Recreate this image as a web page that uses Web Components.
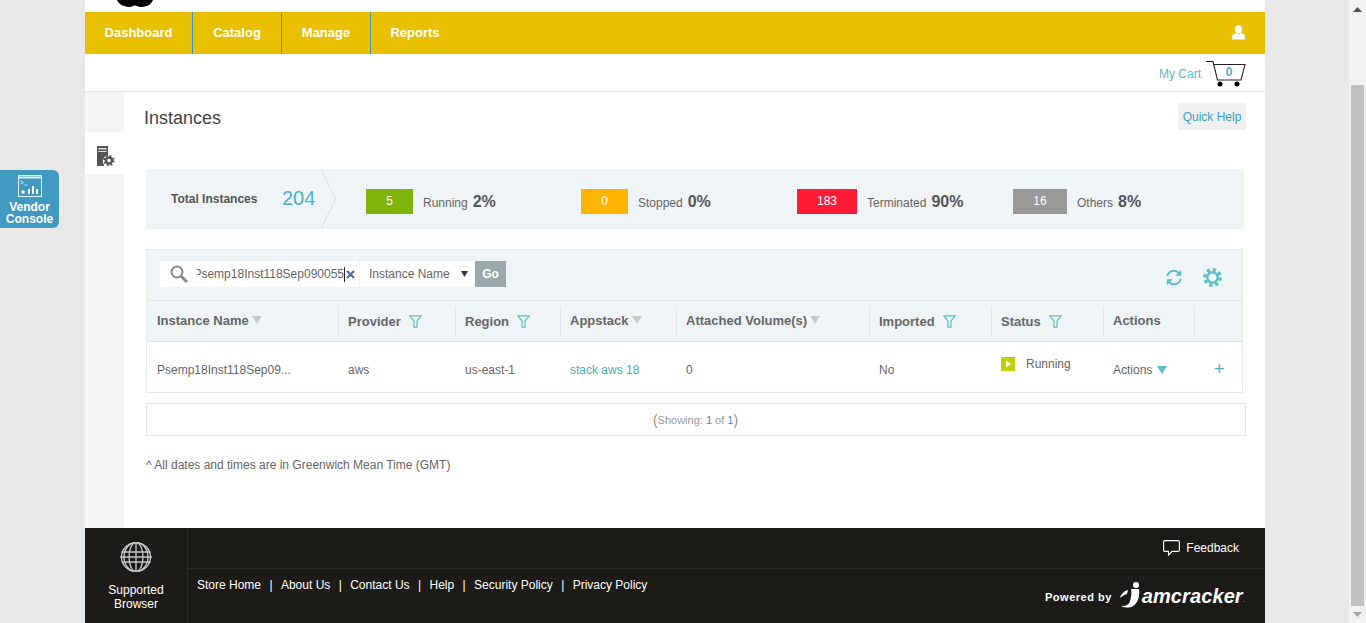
<!DOCTYPE html>
<html lang="en">
<head>
<meta charset="utf-8">
<title>Instances</title>
<style>
    html, body { margin: 0; height: 623px; overflow: hidden; background: #e8e8e8; }
    body { font-family: "Liberation Sans", Arial, sans-serif; font-size: 12px; color: #666; }
</style>
</head>
<body>
<app-shell>
    <top-nav></top-nav>
    <cart-bar></cart-bar>
    <page-body>
        <instance-summary></instance-summary>
        <instances-table></instances-table>
    </page-body>
    <site-footer></site-footer>
</app-shell>
<vendor-tab></vendor-tab>

<script>
const FUNNEL = `<svg width="13" height="13" viewBox="0 0 13 13" fill="none" stroke="#5bbfc9" stroke-width="1.2"><path d="M.8.8h11.400L8 6v6.200H5V6z"/></svg>`;
const SORT = `<svg width="10" height="8" viewBox="0 0 10 8"><path d="M0 0h10L5 8z" fill="#c8c8c8"/></svg>`;

// page frame + scrollbar
class AppShell extends HTMLElement {
    constructor() {
        super();
        this.attachShadow({ mode: 'open' });
        this.shadowRoot.innerHTML = `
            <style>
                :host { display: grid; grid-template-columns: 1fr 17px; height: 623px; }
                .page { padding-left: 85px; }
                .frame { width: 1180px; height: 623px; background: white; display: flex; flex-direction: column; }
                .logo { height: 12px; padding-left: 32px; }
                .logo svg { display: block; }
                .bar { background: #f1f1f1; display: flex; flex-direction: column; align-items: center; }
                .up, .down { height: 17px; display: flex; align-items: center; justify-content: center; flex: none; }
                .up { height: 18px; }
                .track { flex: 1; width: 13px; padding-top: 67px; }
                .thumb { height: 521px; background: #c1c1c1; }
            </style>
            <div class="page">
                <div class="frame">
                    <div class="logo">
                        <svg width="36" height="8" viewBox="0 0 36 8"><path d="M0 0C2 5 8 7 13 7 15 7 16 5.500 18 5.500 20 5.500 21 7 24 7 29 7 34 5 36 0z" fill="#000"/></svg>
                    </div>
                    <slot></slot>
                </div>
            </div>
            <div class="bar">
                <div class="up"><svg width="9" height="5" viewBox="0 0 9 5"><path d="M0 5h9L4.500 0z" fill="#505050"/></svg></div>
                <div class="track"><div class="thumb"></div></div>
                <div class="down"><svg width="9" height="5" viewBox="0 0 9 5"><path d="M0 0h9L4.500 5z" fill="#a3a3a3"/></svg></div>
            </div>
        `;
    }
}
customElements.define('app-shell', AppShell);

// yellow menu
class TopNav extends HTMLElement {
    constructor() {
        super();
        this.attachShadow({ mode: 'open' });
        this.shadowRoot.innerHTML = `
            <style>
                :host { display: flex; height: 42px; background: #e9c000; flex: none; }
                a {
                    width: 88px;
                    text-align: center;
                    color: white;
                    font: bold 13px "Liberation Sans", Arial, sans-serif;
                    line-height: 42px;
                    text-decoration: none;
                    border-right: 1px solid #3f95b8;
                }
                a:first-of-type { width: 107px; }
                a:last-of-type { border-right: none; }
                .user { margin-left: auto; padding: 13px 20px 0 0; }
                svg { display: block; }
            </style>
            <a href="#">Dashboard</a>
            <a href="#">Catalog</a>
            <a href="#">Manage</a>
            <a href="#">Reports</a>
            <div class="user">
                <svg width="13" height="15" viewBox="0 0 14 16" fill="white">
                    <ellipse cx="7" cy="4.600" rx="3.800" ry="4.300"/>
                    <path d="M0 12.500C0 10 2.500 9 4.500 8.500 6 9.800 8 9.800 9.500 8.500 11.500 9 14 10 14 12.500V14.500Q14 15.500 13 15.500H1Q0 15.500 0 14.500z"/>
                </svg>
            </div>
        `;
    }
}
customElements.define('top-nav', TopNav);

class CartBar extends HTMLElement {
    constructor() {
        super();
        this.attachShadow({ mode: 'open' });
        this.shadowRoot.innerHTML = `
            <style>
                :host {
                    display: flex;
                    justify-content: flex-end;
                    align-items: flex-start;
                    gap: 5px;
                    height: 37px;
                    padding-right: 19px;
                    border-bottom: 1px solid #e6e6e6;
                    flex: none;
                }
                .label { color: #5bb7c9; font-size: 12px; margin-top: 13px; }
                .cart { position: relative; width: 40px; height: 34px; margin-top: 6px; }
                .cart svg { display: block; }
                .count {
                    position: absolute;
                    left: 0;
                    right: 0;
                    top: 5px;
                    padding-left: 6px;
                    text-align: center;
                    font-size: 12px;
                    font-weight: bold;
                    color: #4cb3cf;
                }
            </style>
            <span class="label">My Cart</span>
            <div class="cart">
                <svg width="40" height="30" viewBox="0 0 40 30" fill="none" stroke="#222" stroke-width="1.100">
                    <path d="M0 1.500H7L11.500 20H35L39 4.500H8"/>
                    <circle cx="14" cy="24" r="2.500" fill="#000" stroke="none"/>
                    <circle cx="31" cy="24" r="2.500" fill="#000" stroke="none"/>
                </svg>
                <span class="count">0</span>
            </div>
        `;
    }
}
customElements.define('cart-bar', CartBar);

// side rail, title and content column
class PageBody extends HTMLElement {
    constructor() {
        super();
        this.attachShadow({ mode: 'open' });
        this.shadowRoot.innerHTML = `
            <style>
                :host { display: flex; height: 436px; flex: none; }
                .rail { width: 39px; background: #f5f5f5; padding-top: 40px; flex: none; }
                .rail div { height: 42px; background: white; padding: 14px 0 0 12px; box-sizing: border-box; }
                .rail svg { display: block; }
                .content { flex: 1; padding: 11px 19px 0 22px; }
                .head { display: flex; justify-content: space-between; height: 66px; }
                h1 { margin: 4px 0 0 -2px; font: normal 18px/22px "Liberation Sans", Arial, sans-serif; color: #444; }
                .help {
                    width: 68px;
                    height: 27px;
                    line-height: 29px;
                    text-align: center;
                    background: #f0f0f0;
                    color: #3a9fc4;
                    font-size: 12px;
                }
                .note { margin-top: 22px; color: #666; }
            </style>
            <div class="rail">
                <div>
                    <svg width="18" height="20" viewBox="0 0 18 20">
                        <path d="M0 0h11v9a6.500 6.500 0 0 0-4 10v1H0z" fill="#555"/>
                        <path d="M1.500 2h8v1.500h-8zM1.500 5h8v1h-8z" fill="#ddd"/>
                        <circle cx="12" cy="14.500" r="3" fill="none" stroke="#555" stroke-width="2.400"/>
                        <circle cx="12" cy="14.500" r="4.800" fill="none" stroke="#555" stroke-width="1.600" stroke-dasharray="2 1.770"/>
                    </svg>
                </div>
            </div>
            <div class="content">
                <div class="head">
                    <h1>Instances</h1>
                    <div class="help">Quick Help</div>
                </div>
                <slot></slot>
                <div class="note">^ All dates and times are in Greenwich Mean Time (GMT)</div>
            </div>
        `;
    }
}
customElements.define('page-body', PageBody);

class SummaryStat extends HTMLElement {
    constructor() {
        super();
        this.attachShadow({ mode: 'open' });
        const w = this.getAttribute('w');
        const c = this.getAttribute('color');
        this.shadowRoot.innerHTML = `
            <style>
                :host { display: flex; align-items: center; }
                .box {
                    width: ${w}px;
                    height: 25px;
                    line-height: 25px;
                    text-align: center;
                    background: ${c};
                    color: white;
                    font-size: 12px;
                }
                .name { margin-left: 10px; color: #666; font-size: 12px; position: relative; top: 1px; }
                b { margin-left: 5px; font-size: 16px; color: #555; }
            </style>
            <div class="box">${this.getAttribute('count')}</div>
            <span class="name">${this.getAttribute('name')}</span>
            <b>${this.getAttribute('pct')}</b>
        `;
    }
}
customElements.define('summary-stat', SummaryStat);

class InstanceSummary extends HTMLElement {
    constructor() {
        super();
        this.attachShadow({ mode: 'open' });
        this.shadowRoot.innerHTML = `
            <style>
                :host {
                    display: flex;
                    align-items: center;
                    height: 60px;
                    margin-right: 2px;
                    background: #eff4f7;
                }
                .total { width: 220px; height: 60px; display: flex; align-items: center; flex: none; position: relative; box-sizing: border-box; padding: 0 0 0 25px; }
                .total span { font-weight: bold; color: #555; font-size: 12px; width: 111px; margin-top: -1px; }
                .total b { font-weight: normal; font-size: 20px; color: #4cb3c9; margin-top: -2px; }
                .total svg { position: absolute; left: 175px; top: 0; }
                .stats { display: grid; grid-template-columns: 215px 216px 216px 1fr; flex: 1; margin-top: 5px; }
            </style>
            <div class="total">
                <span>Total Instances</span>
                <b>204</b>
                <svg width="16" height="60" viewBox="0 0 16 60" fill="none" stroke="#dcdfe2"><path d="M0 0L14.500 30 0 60"/></svg>
            </div>
            <div class="stats">
                <summary-stat w="47" color="#7fb50a" count="5" name="Running" pct="2%"></summary-stat>
                <summary-stat w="47" color="#ffb400" count="0" name="Stopped" pct="0%"></summary-stat>
                <summary-stat w="60" color="#ff1a35" count="183" name="Terminated" pct="90%"></summary-stat>
                <summary-stat w="54" color="#999999" count="16" name="Others" pct="8%"></summary-stat>
            </div>
        `;
    }
}
customElements.define('instance-summary', InstanceSummary);

class InstancesTable extends HTMLElement {
    constructor() {
        super();
        this.attachShadow({ mode: 'open' });
        this.shadowRoot.innerHTML = `
            <style>
                :host { display: block; margin-top: 20px; --cols: 191px 117px 105px 116px 193px 122px 112px 91px 48px; }
                .panel { border: 1px solid #e3eaec; margin-right: 3px; }
                .tools {
                    height: 51px;
                    background: #eff4f7;
                    border-bottom: 1px solid #dfe7ea;
                    display: flex;
                    padding: 11px 20px 0 13px;
                    box-sizing: border-box;
                }
                .search {
                    width: 199px;
                    height: 26px;
                    background: white;
                    border-radius: 2px;
                    display: flex;
                    align-items: center;
                    padding-left: 10px;
                    box-sizing: border-box;
                }
                .search svg { flex: none; display: block; }
                .term {
                    width: 147px;
                    margin-left: 9px;
                    overflow: hidden;
                    display: flex;
                    justify-content: flex-end;
                    white-space: nowrap;
                    border-right: 1px solid #222;
                    color: #666;
                    line-height: 15px;
                    flex: none;
                }
                .clear { margin-left: 1px; }
                .select {
                    width: 114px;
                    height: 26px;
                    margin-left: 1px;
                    background: white;
                    display: flex;
                    align-items: center;
                    justify-content: space-between;
                    padding: 0 6px 0 9px;
                    box-sizing: border-box;
                }
                .go {
                    width: 31px;
                    height: 26px;
                    margin-left: 1px;
                    line-height: 26px;
                    text-align: center;
                    background: #9aa9ab;
                    color: white;
                    font-weight: bold;
                }
                .icons { margin-left: auto; display: flex; gap: 20px; padding-top: 7px; height: 20px; }
                .head, .row { display: grid; grid-template-columns: var(--cols); }
                .head { height: 40px; background: #eff4f7; border-bottom: 1px solid #dfe7ea; align-items: center; }
                .head div {
                    height: 31px;
                    border-left: 1px solid #dfe7ea;
                    padding: 0 0 2px 9px;
                    box-sizing: border-box;
                    display: flex;
                    align-items: center;
                    gap: 3px;
                    font: bold 13px "Liberation Sans", Arial, sans-serif;
                    color: #666;
                }
                .head div:first-child { border-left: none; padding-left: 10px; }
                .head div.f { gap: 8px; padding-bottom: 0; }
                .head svg { display: block; }
                .row { height: 44px; padding-top: 6px; align-items: center; color: #666; }
                .row div { padding-left: 10px; }
                .row a { color: #44aebd; text-decoration: none; }
                .row .status { display: flex; align-items: flex-start; gap: 11px; margin-top: -12px; }
                .act { display: flex; align-items: center; gap: 5px; }
                .row .plus { color: #44b4c4; font-size: 18px; padding-left: 20px; margin-top: -2px; }
                .pager {
                    margin-top: 10px;
                    height: 33px;
                    border: 1px solid #e6e6e6;
                    box-sizing: border-box;
                    display: flex;
                    align-items: center;
                    justify-content: center;
                    font-size: 11px;
                    color: #999;
                    padding-right: 1px;
                }
                .pager i { font-style: normal; font-size: 14px; color: #b08a5e; }
                .pager em { font-style: normal; color: #3f8fb5; }
            </style>
            <div class="panel">
                <div class="tools">
                    <div class="search">
                        <svg width="18" height="18" viewBox="0 0 18 18" fill="none" stroke="#888"><circle cx="7" cy="7" r="5.500" stroke-width="2"/><path d="M11 11l6 6" stroke-width="3"/></svg>
                        <span class="term">Psemp18Inst118Sep090055</span>
                        <svg class="clear" width="9" height="9" viewBox="0 0 9 9" stroke="#4a6fa5" stroke-width="2.200"><path d="M1 1l7 7M8 1l-7 7"/></svg>
                    </div>
                    <div class="select">
                        <span>Instance Name</span>
                        <svg width="7" height="6" viewBox="0 0 7 6"><path d="M0 0h7L3.500 6z" fill="#333"/></svg>
                    </div>
                    <div class="go">Go</div>
                    <div class="icons">
                        <svg width="18" height="19" viewBox="0 0 20 20" fill="none" stroke="#5bbfc9" stroke-width="2.200">
                            <path d="M2.500 8.500A7.500 7.500 0 0 1 15.800 5.500"/>
                            <path d="M17.500 11.500A7.500 7.500 0 0 1 4.200 14.500"/>
                            <path d="M18 1.500V8H11.500z" fill="#5bbfc9" stroke="none"/>
                            <path d="M2 18.500V12H8.500z" fill="#5bbfc9" stroke="none"/>
                        </svg>
                        <svg width="19" height="19" viewBox="0 0 20 20" fill="none" stroke="#5bbfc9">
                            <circle cx="10" cy="10" r="5.500" stroke-width="2.600"/>
                            <circle cx="10" cy="10" r="8.200" stroke-width="3.400" stroke-dasharray="3.440 3"/>
                        </svg>
                    </div>
                </div>
                <div class="head">
                    <div>Instance Name ${SORT}</div>
                    <div class="f">Provider ${FUNNEL}</div>
                    <div class="f">Region ${FUNNEL}</div>
                    <div>Appstack ${SORT}</div>
                    <div>Attached Volume(s) ${SORT}</div>
                    <div class="f">Imported ${FUNNEL}</div>
                    <div class="f">Status ${FUNNEL}</div>
                    <div>Actions</div>
                    <div></div>
                </div>
                <div class="row">
                    <div>Psemp18Inst118Sep09...</div>
                    <div>aws</div>
                    <div>us-east-1</div>
                    <div><a href="#">stack aws 18</a></div>
                    <div>0</div>
                    <div>No</div>
                    <div class="status">
                        <svg width="14" height="14" viewBox="0 0 14 14"><path d="M0 0h14v14H0z" fill="#c3d000"/><path d="M5 3.500L10 7l-5 3.500z" fill="white"/></svg>
                        <span>Running</span>
                    </div>
                    <div class="act">Actions <svg width="10" height="8" viewBox="0 0 10 8"><path d="M0 0h10L5 8z" fill="#5bbfc9"/></svg></div>
                    <div class="plus">+</div>
                </div>
            </div>
            <div class="pager"><i>(</i>Showing:&nbsp;<em>1</em>&nbsp;of&nbsp;<em>1</em><i>)</i></div>
        `;
    }
}
customElements.define('instances-table', InstancesTable);

class SiteFooter extends HTMLElement {
    constructor() {
        super();
        this.attachShadow({ mode: 'open' });
        this.shadowRoot.innerHTML = `
            <style>
                :host { display: flex; flex: 1; background: #1c1b17; color: white; font-size: 12px; }
                a { color: white; text-decoration: none; }
                .browser {
                    width: 102px;
                    border-right: 1px solid #2c2b27;
                    text-align: center;
                    line-height: 14px;
                    padding-top: 14px;
                    flex: none;
                }
                .browser svg { display: block; margin: 0 auto 11px; }
                .main { flex: 1; display: flex; flex-direction: column; }
                .top {
                    height: 40px;
                    border-bottom: 1px solid #2c2b27;
                    display: flex;
                    justify-content: flex-end;
                    align-items: center;
                    gap: 6px;
                    padding-right: 26px;
                }
                .bottom { flex: 1; display: flex; justify-content: space-between; padding: 9px 20px 0 9px; }
                .links { display: flex; gap: 8.400px; align-items: flex-start; line-height: 14px; }
                .power { display: flex; align-items: flex-start; gap: 8px; margin-top: 4px; }
                .power span { font-size: 11px; font-weight: bold; letter-spacing: .5px; margin-top: 9px; }
                .brand { display: flex; align-items: center; }
                .brand b { font: italic bold 20px/24px "Liberation Sans", Arial, sans-serif; letter-spacing: .1px; margin-left: -1px; }
                .brand sup { font-size: 8px; line-height: 8px; margin-top: 8px; color: #bbb; }
            </style>
            <div class="browser">
                <svg width="34" height="30" viewBox="0 0 34 30" fill="none" stroke="#c8c8c8" stroke-width="1.300">
                    <circle cx="17" cy="15" r="14.500"/>
                    <ellipse cx="17" cy="15" rx="7" ry="14.500"/>
                    <ellipse cx="17" cy="15" rx="12" ry="14.500"/>
                    <path d="M17 0v30M2.500 10h29M2.500 20h29M1 15h32"/>
                </svg>
                Supported<br>Browser
            </div>
            <div class="main">
                <div class="top">
                    <svg width="17" height="16" viewBox="0 0 17 16" fill="none" stroke="white" stroke-width="1.100"><path d="M2 .600h13q1.400 0 1.400 1.400v8q0 1.400-1.400 1.400H9L5.500 15V11.400H2Q.6 11.400 .6 10V2Q.6 .6 2 .6z"/></svg>
                    <a href="#">Feedback</a>
                </div>
                <div class="bottom">
                    <div class="links">
                        <a href="#">Store Home</a><span>|</span>
                        <a href="#">About Us</a><span>|</span>
                        <a href="#">Contact Us</a><span>|</span>
                        <a href="#">Help</a><span>|</span>
                        <a href="#">Security Policy</a><span>|</span>
                        <a href="#">Privacy Policy</a>
                    </div>
                    <div class="power">
                        <span>Powered by</span>
                        <div class="brand">
                            <svg width="23" height="27" viewBox="0 0 23 27" fill="white">
                                <circle cx="16" cy="3" r="3"/>
                                <path d="M11 7h8c1 7-1 14-6 17-3 2-8 2-12 0 5 0 8-1 9-5 1-3 2-8 1-12z"/>
                                <path d="M8 8C4 9 1 12 0 16c2-2 4-3 7-4z"/>
                            </svg>
                            <b>amcracker</b><sup>.</sup>
                        </div>
                    </div>
                </div>
            </div>
        `;
    }
}
customElements.define('site-footer', SiteFooter);

// fixed tab on the left edge, floats over the page
class VendorTab extends HTMLElement {
    constructor() {
        super();
        this.attachShadow({ mode: 'open' });
        this.shadowRoot.innerHTML = `
            <style>
                :host {
                    position: fixed;
                    left: 0;
                    top: 170px;
                    width: 59px;
                    height: 58px;
                    background: #419ac0;
                    border-radius: 0 6px 6px 0;
                    color: white;
                    text-align: center;
                    font: bold 12px/12px "Liberation Sans", Arial, sans-serif;
                    padding-top: 5px;
                    box-sizing: border-box;
                }
                svg { display: block; margin: 0 auto 4px; }
            </style>
            <svg width="24" height="22" viewBox="0 0 24 22" fill="none" stroke="#e4f1f6">
                <rect x=".5" y=".5" width="23" height="21"/>
                <path d="M1 2.500h22" stroke-width="2"/>
                <path d="M2.500 6l3 1.500-3 1.500M6.500 10h3" stroke-width=".8"/>
                <circle cx="5" cy="17" r="1.800" fill="#fff" stroke="none"/>
                <path d="M11 19v-5M15 19v-8M19 19v-5" stroke="#fff" stroke-width="2"/>
            </svg>
            Vendor<br>Console
        `;
    }
}
customElements.define('vendor-tab', VendorTab);
</script>
</body>
</html>
